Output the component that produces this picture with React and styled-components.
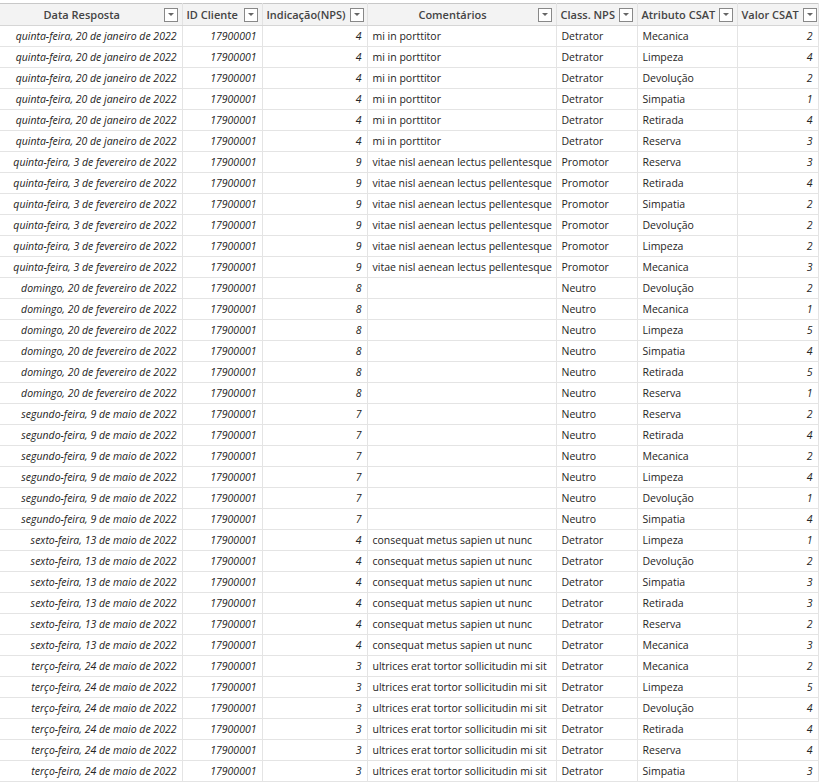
import React from "react";
import styled, { createGlobalStyle } from "styled-components";

const Global = createGlobalStyle`
  body { margin: 0; background: #fff; font-family: "Open Sans", "Noto Sans", sans-serif; }
`;

const Table = styled.table`
  border-collapse: collapse;
  table-layout: fixed;
  width: 818px;
  margin-top: 3px;
  font-size: 10.5px;
  color: #252423;
`;

const Th = styled.th`
  height: 21px;
  background: #f3f3f3;
  border-top: 1px solid #c8c8c8;
  border-bottom: 1px solid #d6d6d6;
  border-right: 1px solid #e2e2e2;
  font-weight: 600;
  color: #444;
  font-size: 11px;
  padding: 0 4px;
  white-space: nowrap;
`;

const HeadInner = styled.div`
  display: flex;
  align-items: center;
  gap: 4px;
  span { flex: 1; text-align: ${(p) => p.$align}; }
`;

const Drop = styled.div`
  width: 12px;
  height: 12px;
  flex: none;
  border: 1px solid #888;
  background: #fff;
  display: flex;
  align-items: center;
  justify-content: center;
  &::after {
    content: "";
    border-left: 3px solid transparent;
    border-right: 3px solid transparent;
    border-top: 3px solid #666;
  }
`;

const Td = styled.td`
  height: 20px;
  border-bottom: 1px solid #e4e4e4;
  border-right: 1px solid #e4e4e4;
  padding: 0 5px;
  white-space: nowrap;
  overflow: hidden;
  text-align: ${(p) => (p.$right ? "right" : "left")};
  font-style: ${(p) => (p.$italic ? "italic" : "normal")};
`;

const cols = [
  ["Data Resposta", 182, "center"],
  ["ID Cliente", 80, "left"],
  ["Indicação(NPS)", 105, "left"],
  ["Comentários", 189, "center"],
  ["Class. NPS", 81, "left"],
  ["Atributo CSAT", 100, "left"],
  ["Valor CSAT", 81, "left"],
];

const groups = [
  ["quinta-feira, 20 de janeiro de 2022", 4, "mi in porttitor", "Detrator", ["Mecanica", 2], ["Limpeza", 4], ["Devolução", 2], ["Simpatia", 1], ["Retirada", 4], ["Reserva", 3]],
  ["quinta-feira, 3 de fevereiro de 2022", 9, "vitae nisl aenean lectus pellentesque", "Promotor", ["Reserva", 3], ["Retirada", 4], ["Simpatia", 2], ["Devolução", 2], ["Limpeza", 2], ["Mecanica", 3]],
  ["domingo, 20 de fevereiro de 2022", 8, "", "Neutro", ["Devolução", 2], ["Mecanica", 1], ["Limpeza", 5], ["Simpatia", 4], ["Retirada", 5], ["Reserva", 1]],
  ["segundo-feira, 9 de maio de 2022", 7, "", "Neutro", ["Reserva", 2], ["Retirada", 4], ["Mecanica", 2], ["Limpeza", 4], ["Devolução", 1], ["Simpatia", 4]],
  ["sexto-feira, 13 de maio de 2022", 4, "consequat metus sapien ut nunc", "Detrator", ["Limpeza", 1], ["Devolução", 2], ["Simpatia", 3], ["Retirada", 3], ["Reserva", 2], ["Mecanica", 3]],
  ["terço-feira, 24 de maio de 2022", 3, "ultrices erat tortor sollicitudin mi sit", "Detrator", ["Mecanica", 2], ["Limpeza", 5], ["Devolução", 4], ["Retirada", 4], ["Reserva", 4], ["Simpatia", 3]],
];

const rows = groups.flatMap(([date, nps, com, cls, ...attrs]) =>
  attrs.map(([a, v]) => ({ date, nps, com, cls, a, v }))
);

export default function App() {
  return (
    <>
      <Global />
      <Table>
        <colgroup>
          {cols.map(([n, w]) => <col key={n} style={{ width: w }} />)}
        </colgroup>
        <thead>
          <tr>
            {cols.map(([n, , al]) => (
              <Th key={n}>
                <HeadInner $align={al}>
                  <span>{n}</span>
                  <Drop />
                </HeadInner>
              </Th>
            ))}
          </tr>
        </thead>
        <tbody>
          {rows.map((r, i) => (
            <tr key={i}>
              <Td $right $italic>{r.date}</Td>
              <Td $right $italic>17900001</Td>
              <Td $right $italic>{r.nps}</Td>
              <Td>{r.com}</Td>
              <Td>{r.cls}</Td>
              <Td>{r.a}</Td>
              <Td $right $italic>{r.v}</Td>
            </tr>
          ))}
        </tbody>
      </Table>
    </>
  );
}
